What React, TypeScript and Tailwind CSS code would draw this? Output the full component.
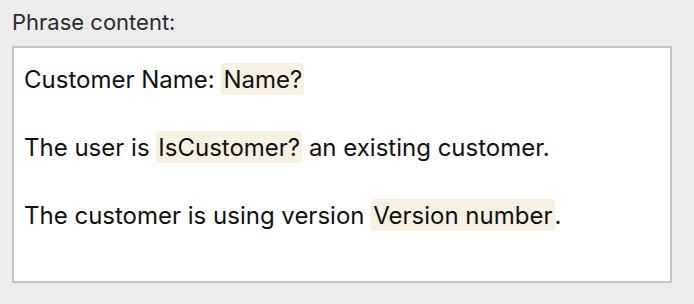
export default function App() {
  const chip = 'inline-block h-8 rounded-[4px] bg-[#f7f1e1] px-[2px] leading-[34px]';
  return (
    <div
      className="h-[304px] w-[694px] bg-[#ececec] px-3 pt-[10px]"
      style={{ fontFamily: 'Inter, "Noto Sans", sans-serif' }}
    >
      <div className="h-[36px] text-[22px] leading-[24px] text-[#2b2b2b]">Phrase content:</div>
      <div className="h-[237px] w-[660px] border-2 border-[#c5c5c5] bg-white pl-[10px] pt-[15px] text-[24px] text-[#111]">
        <div className="space-y-9">
          <div className="h-8 leading-[34px]">
            Customer Name: <span className={chip}>Name?</span>
          </div>
          <div className="h-8 leading-[34px]">
            The user is <span className={chip}>IsCustomer?</span> an existing customer.
          </div>
          <div className="h-8 leading-[34px]">
            The customer is using version <span className={chip}>Version number</span>.
          </div>
        </div>
      </div>
    </div>
  );
}
